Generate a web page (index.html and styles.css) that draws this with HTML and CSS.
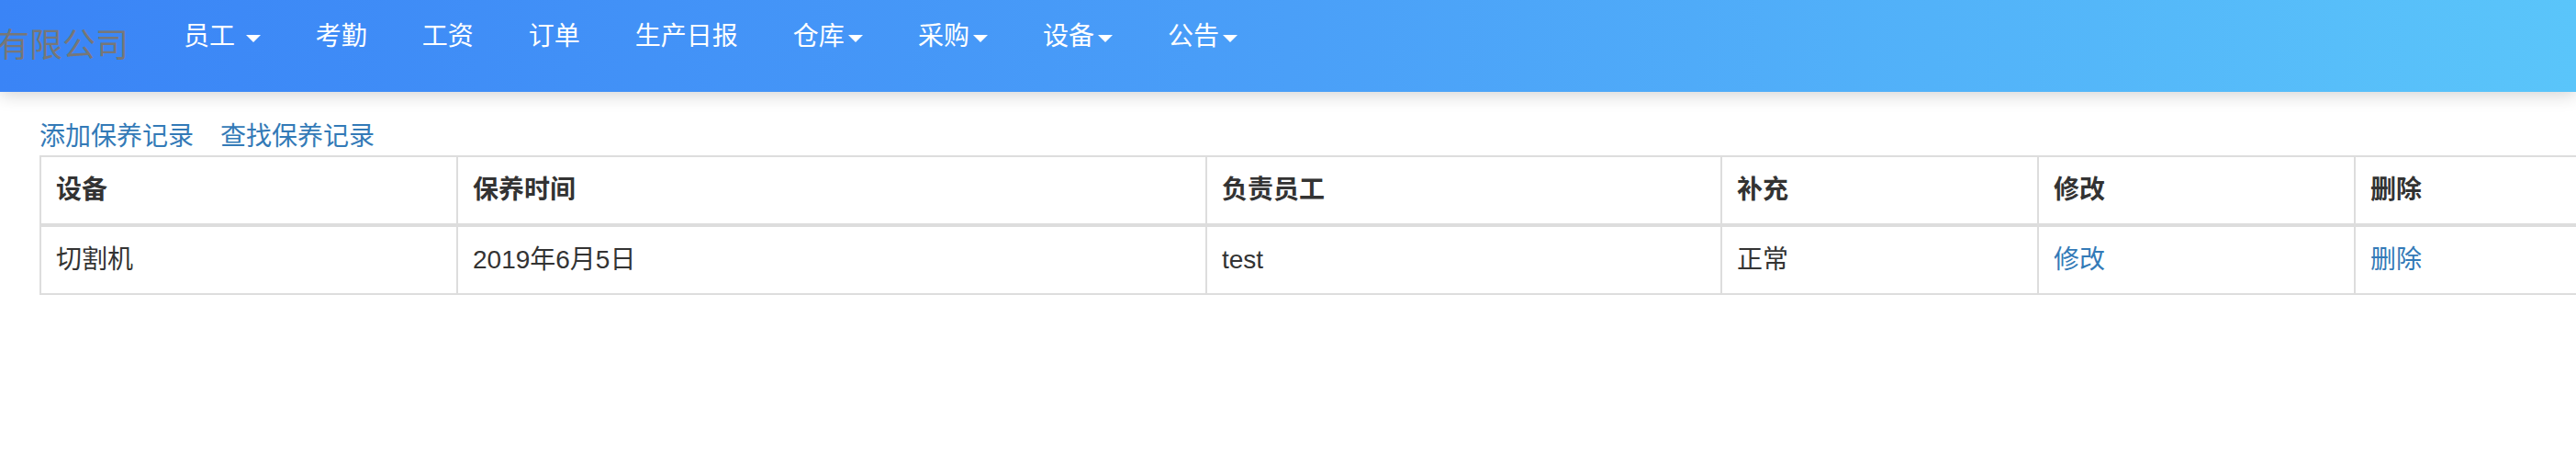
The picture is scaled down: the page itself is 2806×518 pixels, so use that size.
FILE: index.html
```html
<!DOCTYPE html>
<html lang="zh-CN">
<head>
<meta charset="utf-8">
<title>保养记录</title>
<link rel="stylesheet" href="styles.css">
</head>
<body>
<nav class="navbar">
  <a class="brand" href="#">有限公司</a>
  <ul class="nav">
    <li><a href="#">员工 <span class="caret"></span></a></li>
    <li><a href="#">考勤</a></li>
    <li><a href="#">工资</a></li>
    <li><a href="#">订单</a></li>
    <li><a href="#">生产日报</a></li>
    <li><a href="#">仓库<span class="caret"></span></a></li>
    <li><a href="#">采购<span class="caret"></span></a></li>
    <li><a href="#">设备<span class="caret"></span></a></li>
    <li><a href="#">公告<span class="caret"></span></a></li>
  </ul>
</nav>
<main class="content">
  <div class="actions">
    <a href="#">添加保养记录</a>
    <a href="#">查找保养记录</a>
  </div>
  <table class="records">
    <colgroup>
      <col class="c-device">
      <col class="c-time">
      <col class="c-staff">
      <col class="c-note">
      <col class="c-edit">
      <col class="c-del">
    </colgroup>
    <thead>
      <tr>
        <th>设备</th>
        <th>保养时间</th>
        <th>负责员工</th>
        <th>补充</th>
        <th>修改</th>
        <th>删除</th>
      </tr>
    </thead>
    <tbody>
      <tr>
        <td>切割机</td>
        <td>2019年6月5日</td>
        <td>test</td>
        <td>正常</td>
        <td><a href="#">修改</a></td>
        <td><a href="#">删除</a></td>
      </tr>
    </tbody>
  </table>
</main>
</body>
</html>
```

FILE: styles.css
```css
html, body {
  overflow-x: hidden;
}
body {
  margin: 0;
  background: #fff;
  color: #333;
  font-family: "Liberation Sans", "Noto Sans CJK SC", sans-serif;
  font-size: 28px;
  line-height: 40px;
}
a {
  color: #337ab7;
  text-decoration: none;
}
.navbar {
  position: relative;
  z-index: 2;
  display: flex;
  height: 100px;
  background: linear-gradient(to right, #3a84f6 0%, #4a9ff8 50%, #5ac5fa 100%);
  box-shadow: 0 3px 18px rgba(0, 0, 0, 0.18);
}
.brand {
  display: block;
  margin-left: -34px;
  padding: 30px 30px;
  height: 40px;
  font-size: 36px;
  line-height: 40px;
  color: #777;
}
.nav {
  display: flex;
  margin: 0;
  padding: 0;
  list-style: none;
}
.nav a {
  display: block;
  padding: 20px 30px;
  line-height: 40px;
  color: #fff;
}
.caret {
  display: inline-block;
  width: 0;
  height: 0;
  margin-left: 4px;
  vertical-align: middle;
  border-top: 8px solid #fff;
  border-left: 8px solid transparent;
  border-right: 8px solid transparent;
}
.content {
  padding: 29px 0 0 43px;
}
.actions {
  display: flex;
  gap: 29px;
  height: 40px;
}
.records {
  table-layout: fixed;
  border-collapse: collapse;
  width: 2864px;
}
.c-device { width: 454px; }
.c-time { width: 816px; }
.c-staff { width: 561px; }
.c-note { width: 345px; }
.c-edit { width: 345px; }
.c-del { width: 343px; }
.records th,
.records td {
  padding: 16px;
  border: 2px solid #ddd;
  text-align: left;
  vertical-align: top;
  line-height: 40px;
}
.records th {
  font-weight: bold;
  border-bottom: 4px solid #ddd;
}
```
